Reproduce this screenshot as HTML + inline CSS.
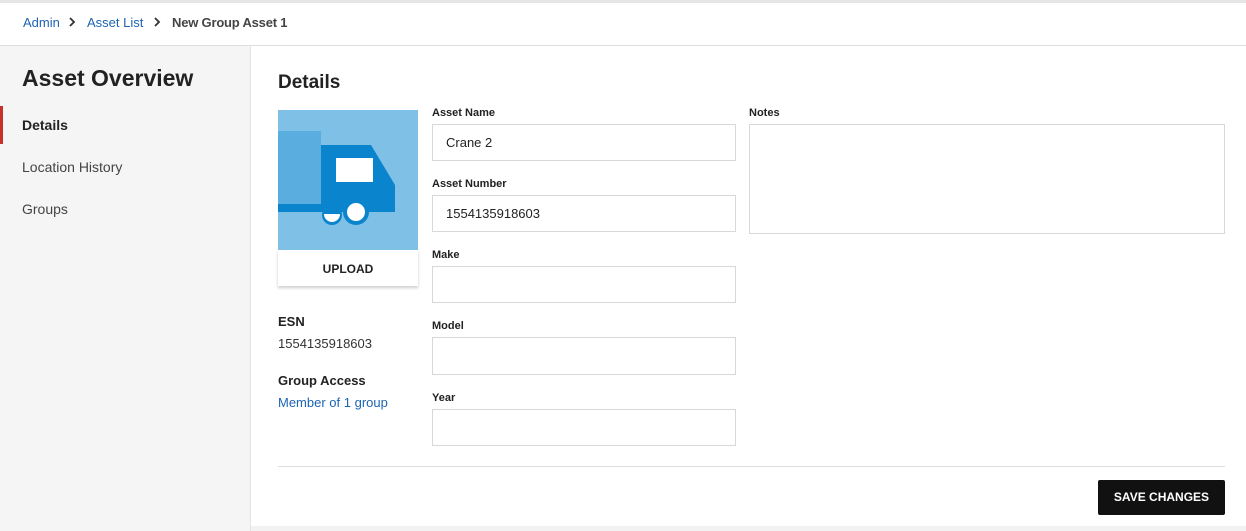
<!DOCTYPE html>
<html><head><style>
*{box-sizing:border-box;margin:0;padding:0}
body{width:1246px;height:531px;background:#fff;font-family:"Liberation Sans",Arial,sans-serif;position:relative;overflow:hidden;color:#222}
.top{position:absolute;left:0;top:0;width:1246px;height:3px;background:#e6e6e6}
.bc{position:absolute;left:0;top:3px;width:1246px;height:43px;border-bottom:1px solid #ddd;font-size:13px}
.bc span{position:absolute;top:12px}
.bc svg{position:absolute;top:13px}
.side{position:absolute;left:0;top:46px;width:251px;height:485px;background:#f5f5f5;border-right:1px solid #e3e3e3}
.abs{position:absolute}
.lbl{position:absolute;font-size:11px;font-weight:bold;color:#222}
.inp{position:absolute;border:1px solid #d8d8d8;background:#fff;font-size:13px;padding-left:13px;line-height:36px;color:#222}
</style></head><body>
<div class="top"></div>
<div class="bc">
<span style="left:23px;color:#1d64b3">Admin</span>
<svg style="left:68px" width="8" height="12" viewBox="0 0 8 12"><path d="M2 2 L6 6 L2 10" fill="none" stroke="#333" stroke-width="1.8"/></svg>
<span style="left:87px;color:#1d64b3">Asset List</span>
<svg style="left:153px" width="8" height="12" viewBox="0 0 8 12"><path d="M2 2 L6 6 L2 10" fill="none" stroke="#333" stroke-width="1.8"/></svg>
<span style="left:172px;color:#444;font-weight:bold;letter-spacing:-0.2px">New Group Asset 1</span>
</div>
<div class="side">
<div class="abs" style="left:22px;top:19px;font-size:23px;font-weight:bold;color:#222">Asset Overview</div>
<div class="abs" style="left:0;top:60px;width:3px;height:38px;background:#c8302a"></div>
<div class="abs" style="left:22px;top:71px;font-size:14px;font-weight:bold">Details</div>
<div class="abs" style="left:22px;top:113px;font-size:14px;color:#444">Location History</div>
<div class="abs" style="left:22px;top:155px;font-size:14px;color:#444">Groups</div>
</div>
<div class="abs" style="left:278px;top:72px;font-size:19px;font-weight:bold">Details</div>
<svg class="abs" style="left:278px;top:110px" width="140" height="140" viewBox="0 0 140 140">
<rect width="140" height="140" fill="#7fc1e6"/>
<rect x="0" y="21" width="43" height="80" fill="#5aaedf"/>
<path d="M43 35 H93 L117 75 V101 H43 Z" fill="#0a84cc"/>
<rect x="0" y="94" width="117" height="8" fill="#0a84cc"/>
<rect x="58" y="48" width="37" height="24" fill="#fff"/>
<circle cx="54" cy="105" r="10" fill="#0a84cc"/><path d="M46 104 a8 8 0 0 0 16 0z" fill="#fff"/>
<circle cx="78" cy="102" r="13" fill="#0a84cc"/><circle cx="78" cy="102" r="9" fill="#fff"/>
</svg>
<div class="abs" style="left:278px;top:250px;width:140px;height:36px;background:#fff;box-shadow:0 2px 3px rgba(0,0,0,.2);font-size:12px;font-weight:bold;text-align:center;line-height:39px">UPLOAD</div>
<div class="abs" style="left:278px;top:314px;font-size:13px;font-weight:bold">ESN</div>
<div class="abs" style="left:278px;top:336px;font-size:13px;color:#333">1554135918603</div>
<div class="abs" style="left:278px;top:373px;font-size:13px;font-weight:bold">Group Access</div>
<div class="abs" style="left:278px;top:395px;font-size:13px;color:#1d64b3">Member of 1 group</div>
<div class="lbl" style="left:432px;top:107px">Asset Name</div>
<div class="inp" style="left:432px;top:124px;width:304px;height:37px">Crane 2</div>
<div class="lbl" style="left:432px;top:178px">Asset Number</div>
<div class="inp" style="left:432px;top:195px;width:304px;height:37px">1554135918603</div>
<div class="lbl" style="left:432px;top:249px">Make</div>
<div class="inp" style="left:432px;top:266px;width:304px;height:37px"></div>
<div class="lbl" style="left:432px;top:320px">Model</div>
<div class="inp" style="left:432px;top:337px;width:304px;height:38px"></div>
<div class="lbl" style="left:432px;top:392px">Year</div>
<div class="inp" style="left:432px;top:409px;width:304px;height:37px"></div>
<div class="lbl" style="left:749px;top:107px">Notes</div>
<div class="inp" style="left:749px;top:124px;width:476px;height:110px"></div>
<div class="abs" style="left:278px;top:466px;width:947px;height:1px;background:#ddd"></div>
<div class="abs" style="left:1098px;top:480px;width:127px;height:35px;background:#111;color:#fff;font-size:12px;font-weight:bold;text-align:center;line-height:35px;border-radius:2px">SAVE CHANGES</div>
<div class="abs" style="left:251px;top:526px;width:995px;height:5px;background:#f2f2f2"></div>
</body></html>
